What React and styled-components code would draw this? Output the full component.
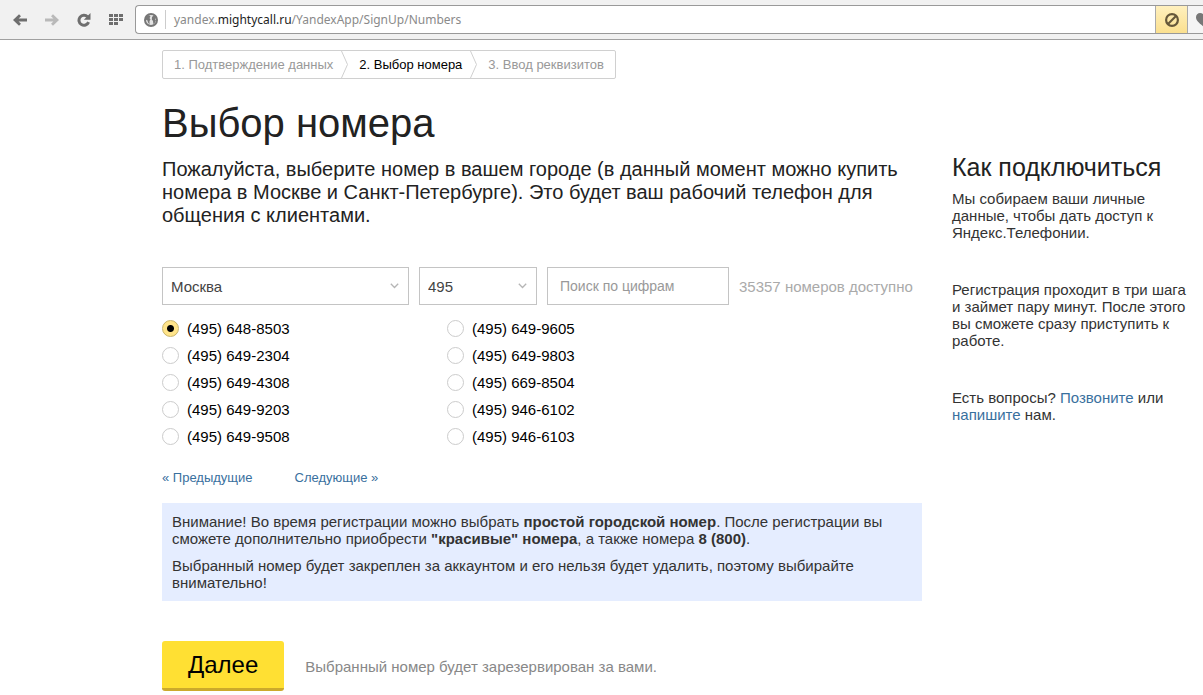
import { useState } from "react";
import styled, { createGlobalStyle } from "styled-components";

const numbers = [
    "(495) 648-8503",
    "(495) 649-2304",
    "(495) 649-4308",
    "(495) 649-9203",
    "(495) 649-9508",
    "(495) 649-9605",
    "(495) 649-9803",
    "(495) 669-8504",
    "(495) 946-6102",
    "(495) 946-6103",
];

function BrowserBar() {
    return (
        <Toolbar>
            <NavButton aria-label="Назад">
                <svg width="14" height="12" viewBox="0 0 14 12">
                    <path d="M7 1.2L2 6l5 4.8M2.5 6H14" fill="none" stroke="#6e6e6e" strokeWidth="2.8" />
                </svg>
            </NavButton>
            <NavButton aria-label="Вперёд" disabled>
                <svg width="14" height="12" viewBox="0 0 14 12">
                    <path d="M7 1.2L12 6l-5 4.8M11.5 6H0" fill="none" stroke="#b9b9b9" strokeWidth="2.8" />
                </svg>
            </NavButton>
            <NavButton aria-label="Обновить">
                <svg width="14" height="14" viewBox="0 0 14 14">
                    <path d="M10.6 3.8A5 5 0 1 0 11.6 9.2" fill="none" stroke="#6e6e6e" strokeWidth="3" />
                    <path d="M13.5 0v6.800H6.800z" fill="#6e6e6e" />
                </svg>
            </NavButton>
            <NavButton aria-label="Экспресс-панель">
                <svg width="14" height="11" viewBox="0 0 14 11" fill="#6e6e6e">
                    <path d="M0 0h4v3H0zM5 0h4v3H5zM10 0h4v3h-4zM0 4h4v3H0zM5 4h4v3H5zM10 4h4v3h-4zM0 8h4v3H0zM5 8h4v3H5z" />
                </svg>
            </NavButton>
            <AddressBar>
                <SiteButton aria-label="Сведения о сайте">
                    <svg width="14" height="14" viewBox="0 0 14 14">
                        <circle cx="7" cy="7" r="6" fill="#e4e4e4" stroke="#777" strokeWidth="2" />
                        <path d="M2 3.500L5 2l1.500 1.500L5.500 5l1 1.500L5.500 8v3.500L4 9.500 3.500 7.500 1.500 6.500z" fill="#777" />
                        <path d="M8 4l2-2 2.500 3-1.500 1 1 1.500-1.500 3L9.300 11 9 8 7.800 6.500z" fill="#777" />
                    </svg>
                </SiteButton>
                <Url>
                    yandex.<Domain>mightycall.ru</Domain>/YandexApp/SignUp/Numbers
                </Url>
                <BlockButton aria-label="Содержимое заблокировано">
                    <svg width="14" height="14" viewBox="0 0 14 14">
                        <circle cx="7" cy="7" r="5.900" fill="none" stroke="#66583a" strokeWidth="2.200" />
                        <path d="M3 11l8-8" stroke="#66583a" strokeWidth="2.200" />
                    </svg>
                </BlockButton>
                <HeartButton aria-label="В закладки">
                    <svg width="16" height="14" viewBox="0 0 16 14">
                        <path d="M8 14C3 10 0 7.500 0 4.300 0 1.800 1.800 0 4.100 0 5.800 0 7.200.900 8 2.300 8.800.900 10.200 0 11.900 0 14.200 0 16 1.800 16 4.300 16 7.500 13 10 8 14z" fill="#777" />
                    </svg>
                </HeartButton>
            </AddressBar>
        </Toolbar>
    );
}

function Separator() {
    return (
        <svg width="7" height="27" viewBox="0 0 7 27" fill="none" stroke="#d0d0d0">
            <path d="M.5 0l6 13.5-6 13.5" />
        </svg>
    );
}

function Dropdown({ label, options, $width }) {
    return (
        <SelectBox $width={$width}>
            <Select aria-label={label}>
                {options.map((option) => (
                    <option key={option}>{option}</option>
                ))}
            </Select>
            <Arrow width="9" height="6" viewBox="0 0 9 6">
                <path d="M.8.800l3.700 3.700L8.200.800" fill="none" stroke="#b5b5b5" strokeWidth="1.300" />
            </Arrow>
        </SelectBox>
    );
}

function App() {
    const [selected, setSelected] = useState(numbers[0]);

    return (
        <>
            <GlobalStyle />
            <BrowserBar />
            <Page>
                <Main>
                    <Steps>
                        <Step>1. Подтверждение данных</Step>
                        <Separator />
                        <Step $active aria-current="step">2. Выбор номера</Step>
                        <Separator />
                        <Step>3. Ввод реквизитов</Step>
                    </Steps>
                    <Title>Выбор номера</Title>
                    <Lead>
                        Пожалуйста, выберите номер в вашем городе (в данный момент можно купить
                        номера в Москве и Санкт-Петербурге). Это будет ваш рабочий телефон для
                        общения с клиентами.
                    </Lead>
                    <Filters>
                        <Dropdown label="Город" options={["Москва", "Санкт-Петербург"]} $width={247} />
                        <Dropdown label="Код" options={["495", "499"]} $width={118} />
                        <Search type="text" aria-label="Поиск по цифрам" placeholder="Поиск по цифрам" />
                        <Available>35357 номеров доступно</Available>
                    </Filters>
                    <Numbers>
                        {numbers.map((number) => (
                            <NumberLabel key={number}>
                                <Radio
                                    type="radio"
                                    name="number"
                                    value={number}
                                    checked={selected === number}
                                    onChange={() => setSelected(number)}
                                />
                                {number}
                            </NumberLabel>
                        ))}
                    </Numbers>
                    <Pager>
                        <Link href="#prev">« Предыдущие</Link>
                        <Link href="#next">Следующие »</Link>
                    </Pager>
                    <Notice>
                        <p>
                            Внимание! Во время регистрации можно выбрать <b>простой городской номер</b>. После
                            регистрации вы сможете дополнительно приобрести <b>"красивые" номера</b>, а также
                            номера <b>8 (800)</b>.
                        </p>
                        <p>
                            Выбранный номер будет закреплен за аккаунтом и его нельзя будет удалить, поэтому
                            выбирайте внимательно!
                        </p>
                    </Notice>
                    <Actions>
                        <NextButton type="button">Далее</NextButton>
                        <Hint>Выбранный номер будет зарезервирован за вами.</Hint>
                    </Actions>
                </Main>
                <Sidebar>
                    <SidebarTitle>Как подключиться</SidebarTitle>
                    <SidebarText>
                        Мы собираем ваши личные данные, чтобы дать доступ к Яндекс.Телефонии.
                    </SidebarText>
                    <SidebarText>
                        Регистрация проходит в три шага и займет пару минут. После этого вы сможете
                        сразу приступить к работе.
                    </SidebarText>
                    <SidebarText>
                        Есть вопросы? <Link href="#call">Позвоните</Link> или{" "}
                        <Link href="#write">напишите</Link> нам.
                    </SidebarText>
                </Sidebar>
            </Page>
        </>
    );
}

export default App;

const GlobalStyle = createGlobalStyle`
    * {
        box-sizing: border-box;
    }

    body {
        margin: 0;
        background: #fff;
        color: #222;
        font-family: "Liberation Sans", Arial, sans-serif;
        font-size: 15px;
        line-height: 17px;
    }

    button, input, select {
        font: inherit;
    }
`;

const Toolbar = styled.header`
    display: flex;
    align-items: center;
    height: 40px;
    padding-left: 4px;
    background: #f1f1f1;
    border-bottom: 1px solid #a0a0a0;
    overflow: hidden;
`;

const NavButton = styled.button`
    display: flex;
    align-items: center;
    justify-content: center;
    width: 32px;
    height: 28px;
    padding: 0;
    border: 0;
    background: none;
`;

const AddressBar = styled.div`
    display: flex;
    flex: 1;
    align-items: stretch;
    height: 29px;
    margin-left: 3px;
    background: #fff;
    border: 1px solid #999;
    border-right: 0;
    border-radius: 4px 0 0 4px;
    overflow: hidden;
`;

const SiteButton = styled.button`
    display: flex;
    align-items: center;
    justify-content: center;
    width: 30px;
    margin: 4px 0;
    padding: 0;
    border: 0;
    border-right: 1px solid #ccc;
    background: none;
`;

const Url = styled.div`
    flex: 1;
    padding-left: 8px;
    color: #8a8a8a;
    font-family: "Noto Sans", "Open Sans", sans-serif;
    font-size: 12px;
    line-height: 27px;
`;

const Domain = styled.span`
    color: #222;
`;

const BlockButton = styled.button`
    display: flex;
    align-items: center;
    justify-content: center;
    width: 33px;
    padding: 0;
    border: 0;
    border-left: 1px solid #aaa;
    border-right: 1px solid #aaa;
    background: linear-gradient(#fff0be, #fbe08f);
`;

const HeartButton = styled.button`
    display: flex;
    align-items: center;
    width: 15px;
    padding: 0 0 0 8px;
    border: 0;
    background: #f5f5f5;

    svg {
        flex-shrink: 0;
    }
`;

const Page = styled.div`
    display: flex;
    gap: 30px;
    padding: 10px 16px 4px 162px;
`;

const Main = styled.main`
    flex: 1;
    max-width: 760px;
`;

const Steps = styled.nav`
    display: flex;
    width: fit-content;
    border: 1px solid #d0d0d0;
    border-radius: 2px;
`;

const Step = styled.span`
    padding: 0 8px 0 11px;
    color: ${(props) => (props.$active ? "#000" : "#999")};
    font-size: 13px;
    line-height: 27px;

    &:last-child {
        padding-right: 11px;
    }
`;

const Title = styled.h1`
    margin: 20px 0 11px;
    font-size: 40px;
    font-weight: normal;
    line-height: 48px;
`;

const Lead = styled.p`
    margin: 0 0 40px;
    font-size: 20px;
    line-height: 23px;
`;

const Filters = styled.div`
    display: flex;
    align-items: center;
    gap: 10px;
    margin-bottom: 10px;
`;

const SelectBox = styled.div`
    position: relative;
    width: ${(props) => props.$width}px;
`;

const Select = styled.select`
    width: 100%;
    height: 38px;
    padding: 0 24px 0 8px;
    appearance: none;
    background: #fff;
    border: 1px solid #c4c4c4;
    border-radius: 0;
    color: #444;
`;

const Arrow = styled.svg`
    position: absolute;
    top: 16px;
    right: 10px;
    pointer-events: none;
`;

const Search = styled.input`
    width: 182px;
    height: 38px;
    padding: 0 12px;
    border: 1px solid #c4c4c4;
    font-size: 14px;

    &::placeholder {
        color: #999;
    }
`;

const Available = styled.span`
    color: #aaa;
    white-space: nowrap;
`;

const Numbers = styled.div`
    display: grid;
    grid-template-rows: repeat(5, 27px);
    grid-template-columns: 285px 285px;
    grid-auto-flow: column;
    margin-bottom: 19px;
`;

const NumberLabel = styled.label`
    display: flex;
    align-items: center;
    gap: 8px;
    color: #000;
`;

const Radio = styled.input`
    width: 17px;
    height: 17px;
    margin: 0;
    appearance: none;
    background: #fff;
    border: 1px solid #ccc;
    border-radius: 50%;

    &:checked {
        background: radial-gradient(circle, #000 3px, #ffe48a 4px);
        border-color: #c9b469;
    }
`;

const Link = styled.a`
    color: #39709e;
    text-decoration: none;
`;

const Pager = styled.nav`
    display: flex;
    gap: 42px;
    margin-bottom: 17px;
    font-size: 13px;
`;

const Notice = styled.section`
    display: grid;
    gap: 10px;
    padding: 10px;
    background: #e5edff;
    color: #333;

    p {
        margin: 0;
    }
`;

const Actions = styled.div`
    display: flex;
    align-items: center;
    gap: 21px;
    margin-top: 40px;
`;

const NextButton = styled.button`
    height: 50px;
    padding: 0 26px;
    background: #ffe033;
    border: 0;
    border-bottom: 3px solid #ccaa2b;
    border-radius: 3px;
    color: #000;
    font-size: 24px;
`;

const Hint = styled.span`
    color: #888;
`;

const Sidebar = styled.aside`
    flex: 0 0 235px;
    padding-top: 103px;
`;

const SidebarTitle = styled.h2`
    margin: 0 0 9px;
    font-size: 25px;
    font-weight: normal;
    line-height: 28px;
`;

const SidebarText = styled.p`
    margin: 0 0 40px;
    color: #333;
`;
